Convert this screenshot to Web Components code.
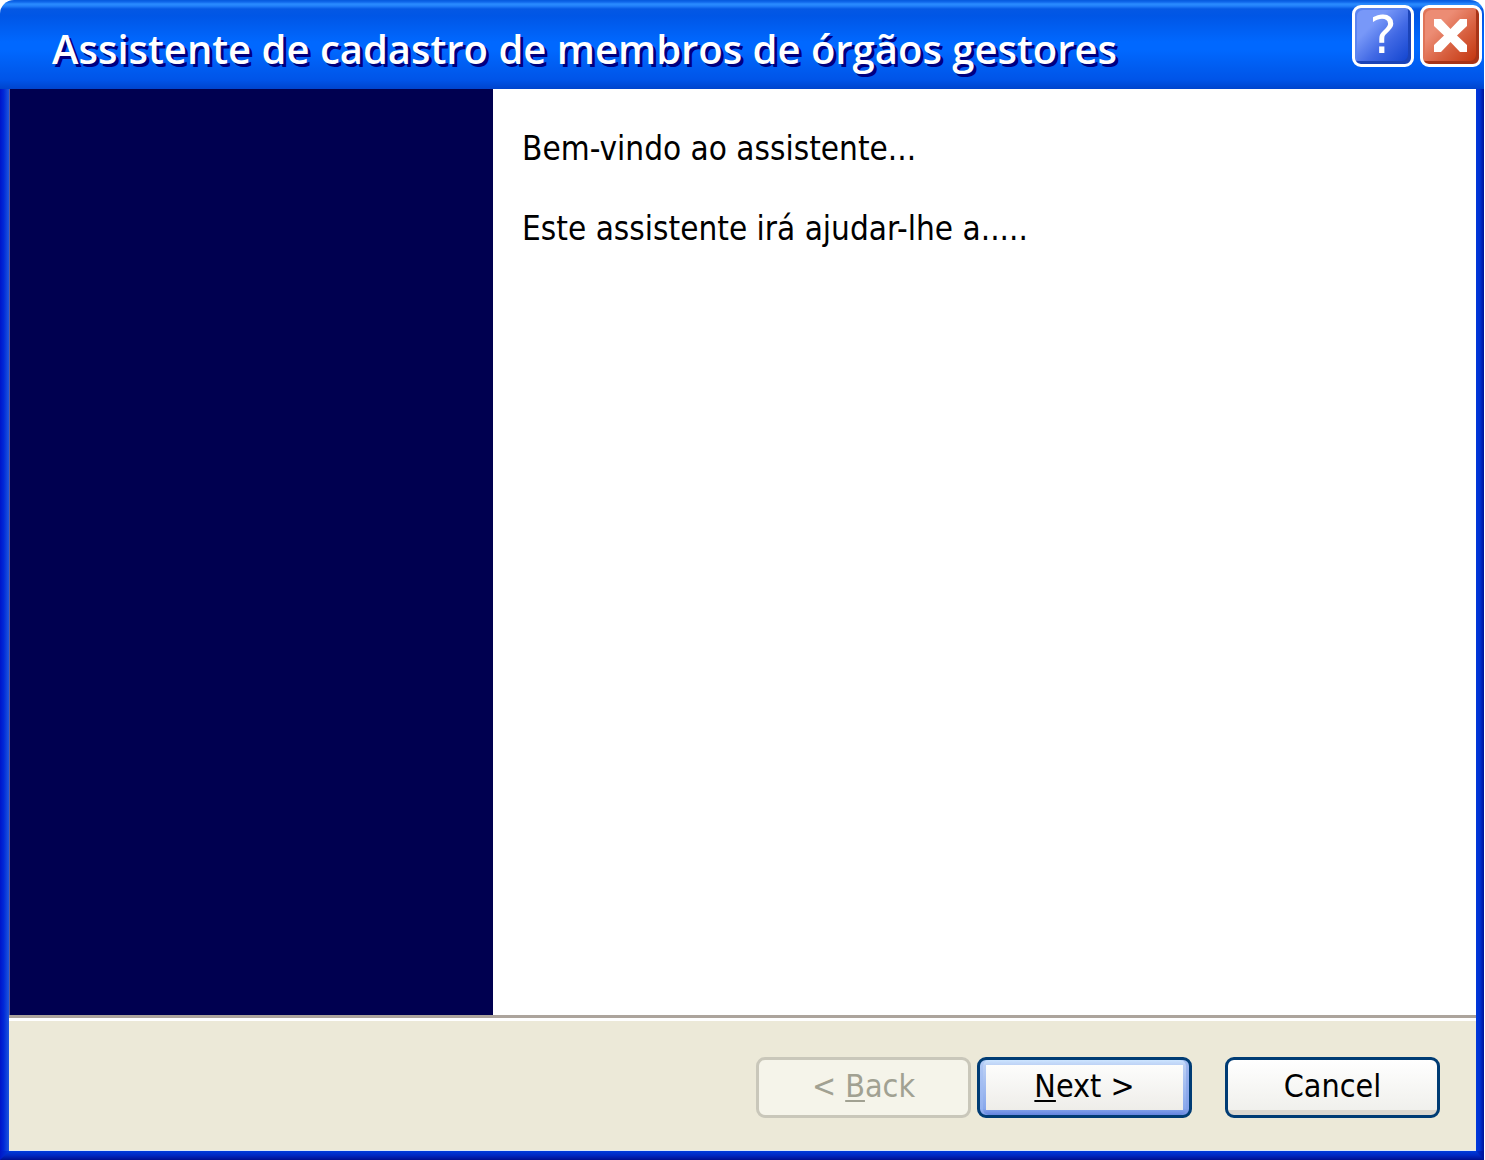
<!DOCTYPE html>
<html lang="pt-BR">
<head>
<meta charset="utf-8">
<meta name="viewport" content="width=device-width, initial-scale=1">
<title>Assistente de cadastro de membros de órgãos gestores</title>
<style>
  html, body { margin: 0; background: #fff; }
  body { font-family: "DejaVu Sans Condensed", "Noto Sans", sans-serif; font-size: 32px; line-height: 40px; color: #000; }
</style>
</head>
<body>
<xp-window>
  <xp-title-bar slot="title">Assistente de cadastro de membros de órgãos gestores</xp-title-bar>
  <wizard-page>
    <p>Bem-vindo ao assistente...</p>
    <p>Este assistente irá ajudar-lhe a.....</p>
  </wizard-page>
  <wizard-footer slot="footer">
    <xp-button slot="steps" variant="disabled">&lt; <u>B</u>ack</xp-button>
    <xp-button slot="steps" variant="default"><u>N</u>ext &gt;</xp-button>
    <xp-button>Cancel</xp-button>
  </wizard-footer>
</xp-window>
<script>
class Base extends HTMLElement {
  constructor() {
    super();
    this.attachShadow({ mode: "open" }).innerHTML = this.constructor.markup;
  }
}

customElements.define("xp-window", class extends Base {
  static markup = `
    <style>
      :host { display: flex; flex-direction: column; min-height: 100vh; margin-right: 1px; }
      .frame { flex: 1; display: grid; grid-template: 1fr 9px / 9px 1fr 8px; }
      .left { background: linear-gradient(to right, #0014c8, #0028d8 40%, #1c56dc); }
      .right { background: linear-gradient(to right, #0038dc, #0030d0 50%, #001098); }
      .base { grid-row: 2; grid-column: 1 / 4; background: linear-gradient(to right, #0018c8, #0038d8 9px, #0030d0 calc(100% - 8px), #001098); }
      .bottom { grid-row: 2; grid-column: 1 / 4; background: linear-gradient(#003cdc, #0028c0 50%, #001090);
        clip-path: polygon(9px 0, calc(100% - 8px) 0, 100% 100%, 0 100%); }
      .client { display: flex; flex-direction: column; }
      .body { flex: 1; display: flex; background: #fff; }
    </style>
    <slot name="title"></slot>
    <div class="frame">
      <div class="left"></div>
      <div class="client"><div class="body"><slot></slot></div><slot name="footer"></slot></div>
      <div class="right"></div>
      <div class="base"></div>
      <div class="bottom"></div>
    </div>`;
});

customElements.define("xp-title-bar", class extends Base {
  static markup = `
    <style>
      :host { display: flex; align-items: flex-start; justify-content: space-between; box-sizing: border-box;
        height: 89px; padding: 5px 2px 0 52px; border-radius: 14px 14px 0 0;
        background: linear-gradient(#0458dc 0, #1068ec 2px, #2a8cff 4px, #2280fa 6px, #0458e4 9px, #0056e6 16px, #0068ff 42px, #0068ff 50px, #005cf0 68px, #0054e8 80px, #0044cc 89px); }
      h1 { margin: 0; padding-top: 18px; font: 600 40px/52px "Open Sans", "Noto Sans", sans-serif; color: #fff; text-shadow: 3px 3px 0 #000080; }
      nav { display: flex; gap: 6px; }
    </style>
    <h1><slot></slot></h1>
    <nav><caption-button kind="help"></caption-button><caption-button kind="close"></caption-button></nav>`;
});

customElements.define("caption-button", class extends Base {
  static markup = `
    <style>
      :host { display: block; }
      button { display: flex; align-items: center; justify-content: center; box-sizing: border-box; width: 62px; height: 62px;
        padding: 0; border: 3px solid #fff; border-radius: 9px; color: #fff; font: 52px/54px "DejaVu Sans", sans-serif; }
      .help { padding-bottom: 2px; background: linear-gradient(135deg, #7898f8 0 30%, #4068e4 60%, #0c40cc); box-shadow: inset -3px -3px #1c44b8, inset 2px 2px #5c84f0; }
      .close { background: linear-gradient(135deg, #ec8c74 0 30%, #d86040 60%, #c03008); box-shadow: inset -3px -3px #a83418, inset 2px 2px #e07458; }
      svg { display: block; width: 56px; height: 56px; }
    </style>
    <button type="button"></button>`;
  connectedCallback() {
    const kind = this.getAttribute("kind");
    const button = this.shadowRoot.querySelector("button");
    button.className = kind;
    button.setAttribute("aria-label", kind === "help" ? "?" : "X");
    button.innerHTML = kind === "help" ? "?" :
      `<svg viewBox="0 0 56 56" aria-hidden="true"><path fill="#fff" d="M11 11H18L27.500 21 37 11H44V18L34 27.500 44 37V44H37L27.500 34 18 44H11V37L21 27.500 11 18Z"/></svg>`;
  }
});

customElements.define("wizard-page", class extends Base {
  static markup = `
    <style>
      :host { flex: 1; display: flex; }
      aside { flex: 0 0 33%; background: #000050; border-left: 1px solid #585898; box-sizing: border-box; }
      main { flex: 1; display: flex; flex-direction: column; gap: 40px; padding: 40px 29px; font-size: 33px; }
      ::slotted(p) { margin: 0 !important; }
    </style>
    <aside></aside>
    <main><slot></slot></main>`;
});

customElements.define("wizard-footer", class extends Base {
  static markup = `
    <style>
      :host { display: flex; justify-content: flex-end; gap: 33px; padding: 39px 36px 33px; background: #ece9d8;
        border-top: 3px solid #aca49c; box-shadow: inset 0 3px #fff, inset 0 -1px #dce8f4; }
      .steps { display: flex; gap: 6px; }
    </style>
    <div class="steps"><slot name="steps"></slot></div>
    <slot></slot>`;
});

customElements.define("xp-button", class extends Base {
  static markup = `
    <style>
      :host { display: block; }
      button { box-sizing: border-box; width: 215px; height: 61px; padding: 0 0 4px; border: 3px solid #003c74; border-radius: 9px;
        background: linear-gradient(#fff, #f0f0ec 50px, #dcd8d0 50px); color: #000; font: inherit; }
      .default {
        background: linear-gradient(#fdfdfc, #eeede9) center / calc(100% - 12px) calc(100% - 10px) no-repeat, linear-gradient(#cce4ff, #bcd0f4 10%, #88a8ec 88%, #6484e0);
        box-shadow: inset 3px 0 #a0bcf480, inset -3px 0 #809ce880; }
      .disabled { border-color: #c9c7ba; background: #f5f4ea; color: #a1a192; }
      ::slotted(u) { text-underline-offset: 3px; text-decoration-thickness: 2px; text-decoration-skip-ink: none; }
    </style>
    <button type="button"><slot></slot></button>`;
  connectedCallback() {
    const variant = this.getAttribute("variant") || "";
    const button = this.shadowRoot.querySelector("button");
    button.className = variant;
    button.disabled = variant === "disabled";
  }
});
</script>
</body>
</html>
